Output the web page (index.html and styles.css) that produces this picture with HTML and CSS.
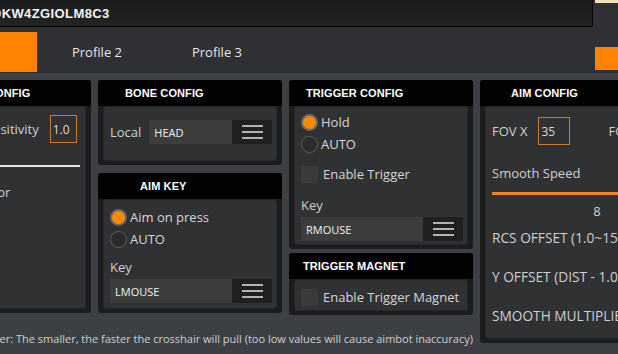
FILE: index.html
```html
<!DOCTYPE html>
<html lang="en">
<head>
    <meta charset="UTF-8">
    <title>Config</title>
    <link rel="stylesheet" href="styles.css">
</head>
<body>
    <div class="header">
        <div class="top-row">
            <div class="key-box"><span class="key">0KW4ZGIOLM8C3</span></div>
            <div class="top-side"><span class="top-strip"></span></div>
        </div>
        <div class="tab-row">
            <div class="tabs">
                <div class="tab active">Profile 1</div>
                <div class="tab">Profile 2</div>
                <div class="tab">Profile 3</div>
            </div>
            <div class="side-btn"></div>
        </div>
    </div>

    <div class="main">
        <div class="left-group">
            <div class="cols">
                <!-- column 1 -->
                <div class="col col-1">
                    <div class="panel panel-mouse">
                        <div class="panel-head">CONFIG</div>
                        <div class="panel-body">
                            <div class="field-row">
                                <span class="label">Sensitivity</span>
                                <span class="num-box">1.0</span>
                            </div>
                            <div class="white-line"></div>
                            <div class="label color-label">Color</div>
                        </div>
                    </div>
                </div>

                <!-- column 2 -->
                <div class="col col-2">
                    <div class="panel panel-bone">
                        <div class="panel-head">BONE CONFIG</div>
                        <div class="panel-body">
                            <div class="select-row">
                                <span class="label">Local</span>
                                <div class="select">
                                    <span class="select-text">HEAD</span>
                                    <span class="menu-btn"><i></i><i></i><i></i></span>
                                </div>
                            </div>
                        </div>
                    </div>
                    <div class="panel panel-aimkey">
                        <div class="panel-head">AIM KEY</div>
                        <div class="panel-body">
                            <div class="radio on"><span class="dot"></span>Aim on press</div>
                            <div class="radio"><span class="dot"></span>AUTO</div>
                            <div class="label key-label">Key</div>
                            <div class="select">
                                <span class="select-text">LMOUSE</span>
                                <span class="menu-btn"><i></i><i></i><i></i></span>
                            </div>
                        </div>
                    </div>
                </div>

                <!-- column 3 -->
                <div class="col col-3">
                    <div class="panel panel-trigger">
                        <div class="panel-head">TRIGGER CONFIG</div>
                        <div class="panel-body">
                            <div class="radio on"><span class="dot"></span>Hold</div>
                            <div class="radio"><span class="dot"></span>AUTO</div>
                            <div class="check"><span class="box"></span><span class="check-text">Enable Trigger</span></div>
                            <div class="label key-label">Key</div>
                            <div class="select">
                                <span class="select-text">RMOUSE</span>
                                <span class="menu-btn"><i></i><i></i><i></i></span>
                            </div>
                        </div>
                    </div>
                    <div class="panel panel-magnet">
                        <div class="panel-head">TRIGGER MAGNET</div>
                        <div class="panel-body">
                            <div class="check"><span class="box"></span><span class="check-text">Enable Trigger Magnet</span></div>
                        </div>
                    </div>
                </div>
            </div>
            <div class="note"><span>Smooth Multiplier: The smaller, the faster the crosshair will pull (too low values will cause aimbot inaccuracy)</span></div>
        </div>

        <!-- column 4 -->
        <div class="panel panel-aim">
            <div class="panel-head">AIM CONFIG</div>
            <div class="panel-body">
                <div class="fov-row">
                    <span class="label">FOV X</span>
                    <span class="num-box">35</span>
                    <span class="label fov-y">FOV Y</span>
                </div>
                <div class="label">Smooth Speed</div>
                <div class="slider"></div>
                <div class="slider-value">8</div>
                <div class="label aim-line">RCS OFFSET (1.0~15.0)</div>
                <div class="label aim-line">Y OFFSET (DIST - 1.0)</div>
                <div class="label aim-line">SMOOTH MULTIPLIER</div>
            </div>
        </div>
    </div>
</body>
</html>
```

FILE: styles.css
```css
body {
    margin: 0;
    width: 618px;
    height: 354px;
    overflow: hidden;
    background: #3c4044;
    font-family: 'Open Sans', 'Noto Sans', sans-serif;
    font-size: 13px;
    color: #d2d2d2;
}

/* header */
.header {
    background: #2e3033;
    height: 73px;
}

.top-row {
    display: flex;
    height: 27px;
}

.key-box {
    width: 592px;
    height: 26px;
    background: linear-gradient(#1c1c1c, #232323);
    border-right: 1px solid #050505;
    border-bottom: 1px solid #050505;
    border-bottom-right-radius: 2px;
    overflow: hidden;
    display: flex;
    align-items: center;
}

.key {
    margin-left: -6px;
    font-family: 'Liberation Sans', sans-serif;
    font-weight: bold;
    font-size: 13px;
    color: #f4f4f4;
    letter-spacing: 0.4px;
}

.top-side {
    flex: 1;
    padding-left: 2px;
}

.top-strip {
    display: block;
    height: 3px;
    background: #f2e2b8;
}

.tab-row {
    display: flex;
    height: 46px;
}

.tabs {
    display: flex;
    margin-left: -83px;
    padding-top: 5px;
}

.tab {
    width: 120px;
    height: 40px;
    display: flex;
    align-items: center;
    justify-content: center;
    color: #e6e6e6;
    font-size: 13px;
}

.tab.active {
    background: #ff8200;
    color: #111;
}

.side-btn {
    margin: 20px 0 0 auto;
    width: 23px;
    height: 23px;
    background: #ff8200;
}

/* main */
.main {
    display: flex;
    gap: 7px;
    margin-left: -34px;
    padding-top: 7px;
}

.left-group {
    width: 507px;
    flex-shrink: 0;
    display: flex;
    flex-direction: column;
}

.cols {
    display: flex;
    gap: 7px;
}

.col {
    display: flex;
    flex-direction: column;
}

.col-1 { width: 125px; }
.col-2 { width: 184px; gap: 8px; }
.col-3 { width: 184px; gap: 4px; }

.panel {
    background: #1c1c1d;
    border-radius: 3px;
    display: flex;
    flex-direction: column;
    box-sizing: border-box;
    padding: 0 5px 4px;
}

.panel-head {
    height: 26px;
    flex-shrink: 0;
    margin: 0 -5px;
    background: #020202;
    border-radius: 3px 3px 0 0;
    display: flex;
    align-items: center;
    font-family: 'Liberation Sans', sans-serif;
    font-weight: bold;
    font-size: 11px;
    color: #fff;
    letter-spacing: 0.1px;
}

.panel-body {
    flex: 1;
    background: #303133;
    border: 1px solid #262728;
    border-radius: 3px;
    padding: 0 4px 0 6px;
}

.panel-mouse { height: 233px; }
.panel-mouse .panel-head { padding-left: 21px; }

.panel-bone { height: 85px; }
.panel-bone .panel-head { padding-left: 27px; }

.panel-aimkey { height: 140px; }
.panel-aimkey .panel-head { padding-left: 42px; }

.panel-trigger { height: 169px; }
.panel-trigger .panel-head { padding-left: 17px; }

.panel-magnet { height: 62px; }
.panel-magnet .panel-head { padding-left: 14px; }

.panel-aim {
    width: 200px;
    height: 263px;
    flex-shrink: 0;
}
.panel-aim .panel-head { padding-left: 31px; }

.label {
    color: #cfcfcf;
    white-space: nowrap;
}

/* inputs */
.num-box {
    width: 28px;
    height: 26px;
    border: 1px solid #c97a2c;
    display: flex;
    align-items: center;
    padding-left: 2px;
    box-sizing: content-box;
    font-size: 12px;
    color: #d8d8d8;
}

.field-row {
    display: flex;
    justify-content: flex-end;
    align-items: center;
    gap: 11px;
    margin-top: 8px;
}

.field-row .num-box {
    margin-right: 4px;
}

.white-line {
    height: 2px;
    background: #e4e4e4;
    margin: 22px 1px 0 0;
}

.color-label {
    margin-top: 16px;
}

.select-row {
    display: flex;
    align-items: center;
    gap: 8px;
    margin-top: 13px;
}

.select {
    flex: 1;
    height: 24px;
    background: #3d3d3e;
    display: flex;
    align-items: center;
}

.select-text {
    flex: 1;
    padding-left: 5px;
    font-size: 11px;
    color: #f2f2f2;
}

.menu-btn {
    width: 40px;
    height: 24px;
    background: #221f1f;
    display: flex;
    flex-direction: column;
    align-items: center;
    justify-content: center;
    gap: 4px;
}

.menu-btn i {
    display: block;
    width: 21px;
    height: 2px;
    background: #b2b2b2;
}

.radio {
    display: flex;
    align-items: center;
    gap: 3px;
    height: 22px;
    color: #d6d6d6;
}

.dot {
    width: 15px;
    height: 15px;
    border-radius: 50%;
    border: 1px solid #5c5c5c;
    background: #2b2b2c;
}

.radio.on .dot {
    background: #ff8a00;
    border: 2px solid #6a6a6a;
    width: 13px;
    height: 13px;
}

.panel-aimkey .panel-body { padding-top: 6px; }
.panel-trigger .panel-body { padding-top: 4px; }

.key-label {
    margin-top: 8px;
    height: 21px;
}

.panel-trigger .key-label { margin-top: 12px; }

.check {
    display: flex;
    align-items: center;
    gap: 5px;
    margin-top: 9px;
    white-space: nowrap;
}

.box {
    flex-shrink: 0;
    width: 17px;
    height: 17px;
    border-radius: 2px;
    background: #3b3b3c;
}

.check-text {
    color: #d6d6d6;
    padding: 1px 2px 1px 0;
}

.panel-magnet .check { margin-top: 7px; }

.note {
    margin-top: 16px;
    display: flex;
    justify-content: flex-end;
    white-space: nowrap;
    font-size: 11px;
    color: #cfcfcf;
}

.note span {
    flex-shrink: 0;
}

/* aim config */
.panel-aim .panel-body {
    padding-left: 6px;
    overflow: hidden;
}

.fov-row {
    display: flex;
    align-items: center;
    gap: 11px;
    margin: 10px 0 19px;
}

.fov-y { margin-left: 27px; }

.slider {
    width: 210px;
    height: 3px;
    background: #f0861a;
    margin-top: 10px;
}

.slider-value {
    width: 210px;
    text-align: center;
    margin-top: 7px;
}

.aim-line {
    margin-top: 13px;
    height: 26px;
    line-height: 26px;
    font-size: 13.7px;
}

.slider-value + .aim-line { margin-top: 5px; }
```
